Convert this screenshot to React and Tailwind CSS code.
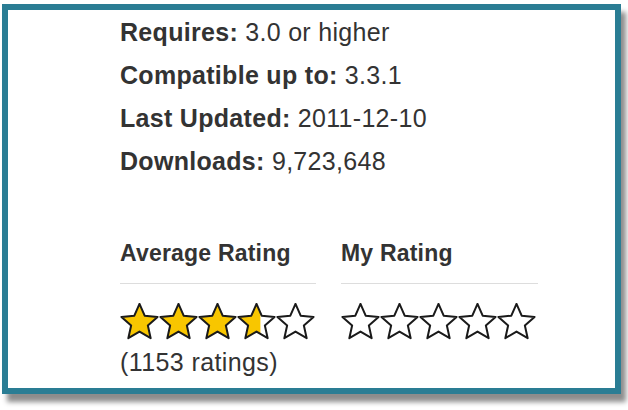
import React from "react";

// star outline points, computed once
const starPoints = (() => {
  const cx = 19.5, cy = 19.8, R = 19, r = 8.8;
  const pts = [];
  for (let i = 0; i < 10; i++) {
    const rad = i % 2 === 0 ? R : r;
    const a = (Math.PI / 5) * i - Math.PI / 2;
    pts.push(`${(cx + rad * Math.cos(a)).toFixed(2)},${(cy + rad * Math.sin(a)).toFixed(2)}`);
  }
  return pts.join(" ");
})();

// Single star, fill = fraction 0..1 of yellow from the left
function Star({ fill = 0, id }) {
  return (
    <svg width="39" height="37" viewBox="0 0 39 37" className="block">
      <defs>
        <clipPath id={id}>
          <rect x="0" y="0" width={39 * fill} height="37" />
        </clipPath>
      </defs>
      <polygon points={starPoints} fill="#fff" />
      {fill > 0 && <polygon points={starPoints} fill="#f8c600" clipPath={`url(#${id})`} />}
      <polygon
        points={starPoints}
        fill="none"
        stroke="#1a1a1a"
        strokeWidth="2"
        strokeLinejoin="round"
      />
    </svg>
  );
}

function Stars({ values, prefix }) {
  return (
    <div className="flex">
      {values.map((v, i) => (
        <Star key={i} fill={v} id={`${prefix}-${i}`} />
      ))}
    </div>
  );
}

export default function App() {
  const info = [
    ["Requires:", "3.0 or higher"],
    ["Compatible up to:", "3.3.1"],
    ["Last Updated:", "2011-12-10"],
    ["Downloads:", "9,723,648"],
  ];

  return (
    <div className="w-[628px] h-[410px] bg-white font-['Liberation_Sans',Arial,sans-serif] text-[#333]">
      <div className="ml-[2px] mt-[4px] w-[619px] h-[390px] border-[6px] border-[#2a7d94] bg-white shadow-[5px_8px_5px_rgba(0,0,0,0.45)]">
        <div className="pl-[112px] pt-[1px]">
          {/* plugin details */}
          {info.map(([label, value]) => (
            <div key={label} className="text-[25px] leading-[43px] tracking-[0.3px]">
              <span className="font-bold">{label}</span> {value}
            </div>
          ))}

          {/* ratings */}
          <div className="flex gap-[25px] mt-[56px]">
            <div className="w-[196px]">
              <div className="text-[23px] font-bold leading-[28px] pb-[16px] border-b border-[#ddd] tracking-[0.2px]">
                Average Rating
              </div>
              <div className="mt-[19px]">
                <Stars values={[1, 1, 1, 0.6, 0]} prefix="avg" />
              </div>
              <div className="text-[25px] leading-[28px] mt-[8px] tracking-[0.4px]">(1153 ratings)</div>
            </div>
            <div className="w-[197px]">
              <div className="text-[23px] font-bold leading-[28px] pb-[16px] border-b border-[#ddd] tracking-[0.2px]">
                My Rating
              </div>
              <div className="mt-[19px]">
                <Stars values={[0, 0, 0, 0, 0]} prefix="mine" />
              </div>
            </div>
          </div>
        </div>
      </div>
    </div>
  );
}
